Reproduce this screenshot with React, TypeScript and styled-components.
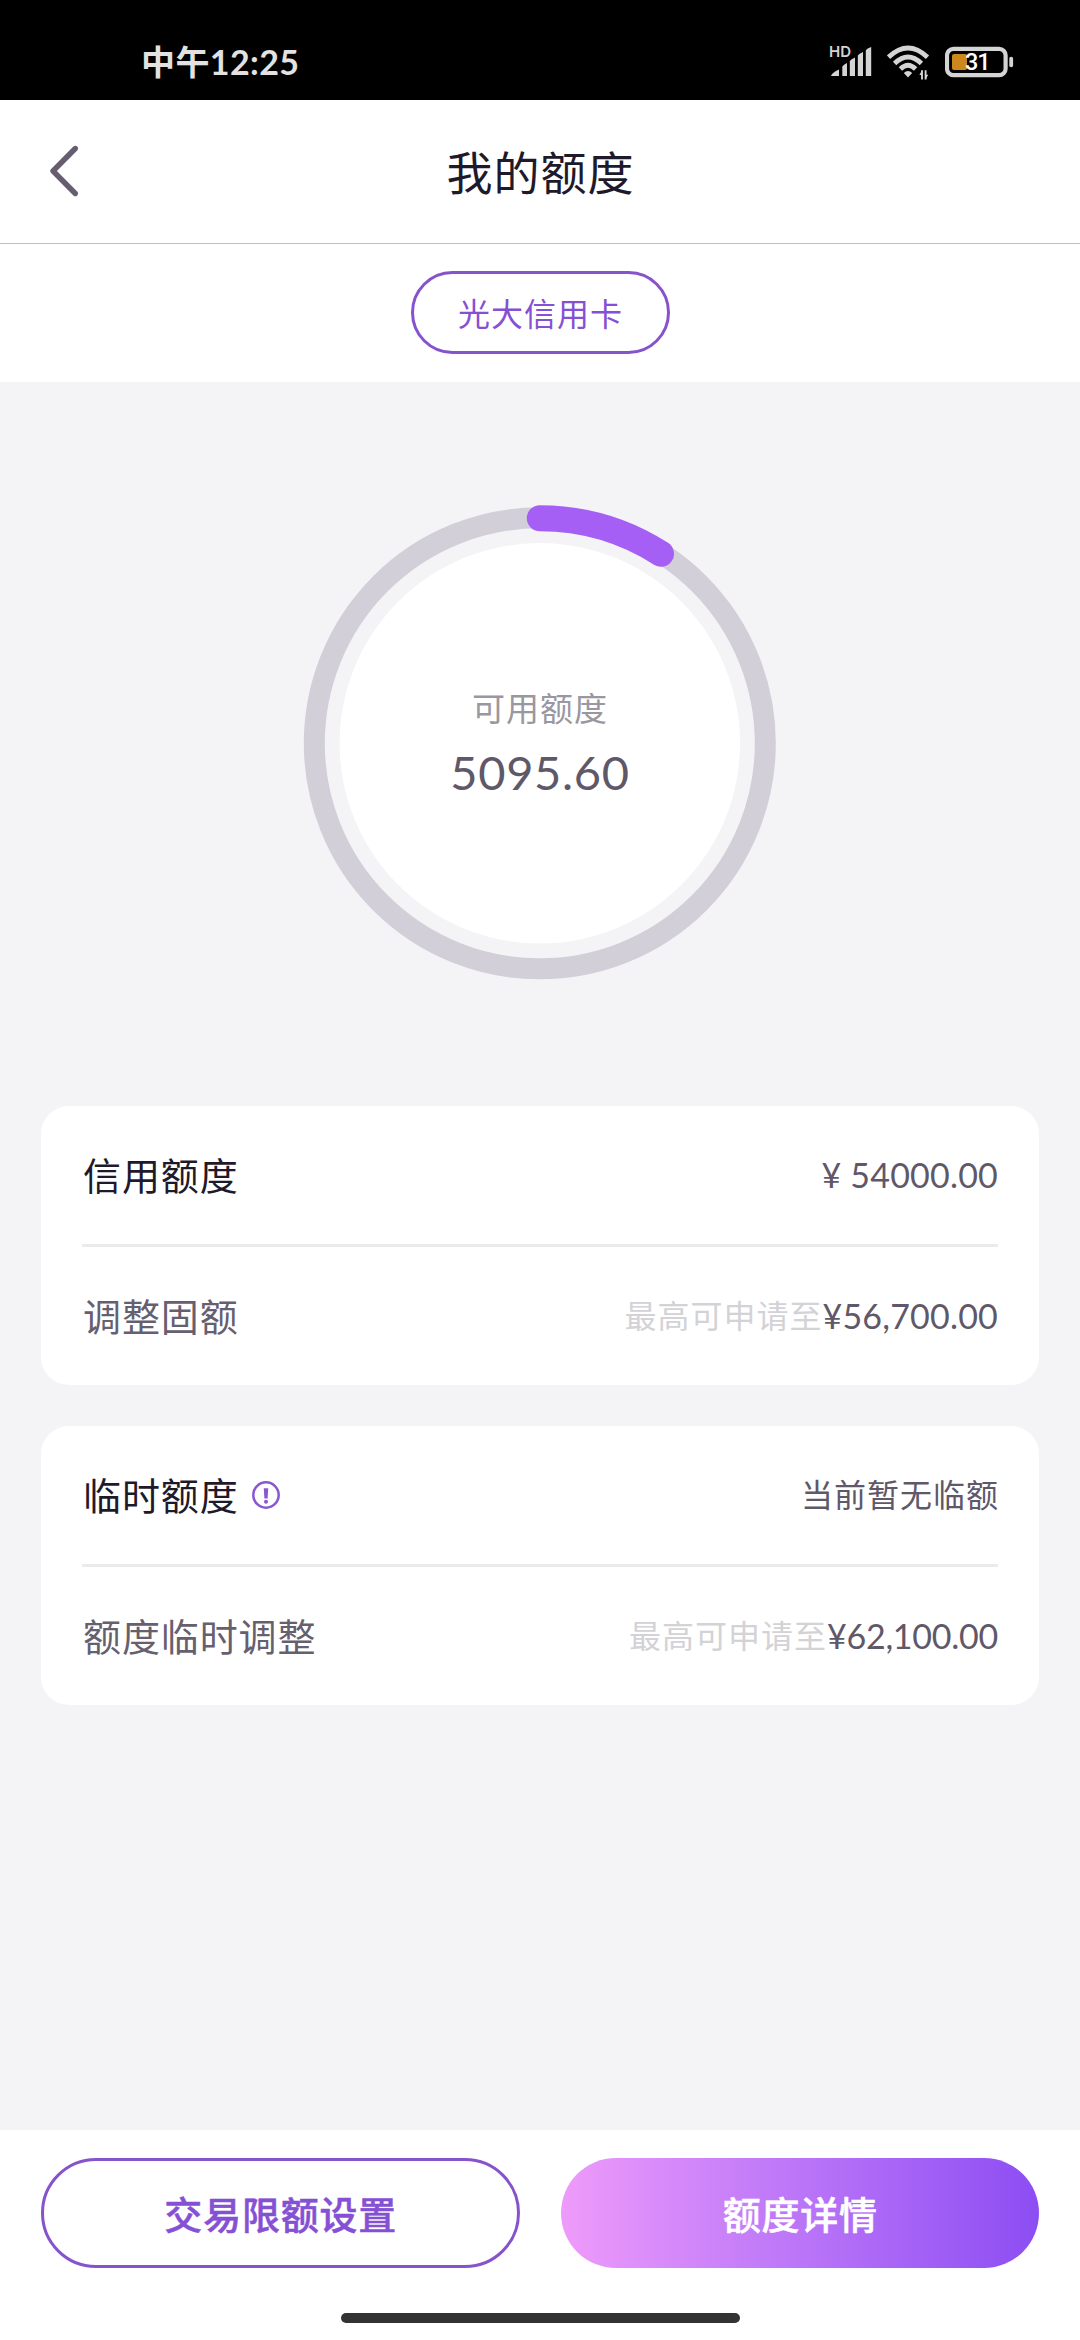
import React from "react";
import styled, { createGlobalStyle } from "styled-components";

const GlobalStyle = createGlobalStyle`
  *, *::before, *::after { box-sizing: border-box; }
  body {
    margin: 0;
    background: #f4f4f7;
    font-family: Lato, "Noto Sans CJK SC", sans-serif;
  }
`;

const Screen = styled.main`
  width: 1080px;
  height: 2340px;
  display: flex;
  flex-direction: column;
  background: #f4f4f7;
  overflow: hidden;
`;

const StatusBar = styled.div`
  height: 100px;
  flex: none;
  display: flex;
  align-items: flex-start;
  justify-content: space-between;
  padding: 44px 65px 0 141px;
  background: #000;
  color: #e2e2e2;
`;

const Clock = styled.div`
  display: flex;
  align-items: center;
  height: 36px;
  font-size: 34px;
  font-weight: 700;
  line-height: 36px;
  letter-spacing: 0.4px;
`;

const StatusIcons = styled.div`
  display: flex;
  align-items: flex-start;
  gap: 14px;
  height: 38px;
`;

const Signal = styled.div`
  position: relative;
  width: 44px;
  height: 38px;
`;

const SignalTag = styled.span`
  position: absolute;
  left: 0;
  top: 0;
  font-family: Inter, sans-serif;
  font-size: 15px;
  line-height: 15px;
  font-weight: 600;
  color: #d4d4d4;
`;

const Battery = styled.div`
  position: relative;
  width: 70px;
  height: 38px;
`;

const BatteryLevel = styled.span`
  position: absolute;
  left: 20px;
  top: 3px;
  font-family: Roboto, sans-serif;
  font-size: 23.5px;
  line-height: 30px;
  font-weight: 500;
  letter-spacing: -1px;
  color: #fff;
`;

const Header = styled.header`
  height: 144px;
  flex: none;
  display: grid;
  grid-template-columns: 130px 1fr 130px;
  align-items: center;
  background: #fff;
  border-bottom: 1px solid #bfbfc2;
`;

const BackButton = styled.button`
  justify-self: start;
  display: flex;
  margin: 0 0 2px 48px;
  padding: 0;
  border: 0;
  background: none;
`;

const Title = styled.h1`
  margin: 0;
  padding-top: 2px;
  font-size: 46px;
  font-weight: 400;
  line-height: 60px;
  letter-spacing: 1px;
  text-indent: 1px;
  text-align: center;
  color: #1e1a2b;
`;

const TabStrip = styled.nav`
  height: 138px;
  flex: none;
  display: flex;
  justify-content: center;
  padding-top: 27px;
  background: #fff;
`;

const CardTab = styled.button`
  width: 259px;
  height: 83px;
  padding: 0 0 2px 1px;
  border: 3px solid #8653cd;
  border-radius: 42px;
  background: #fff;
  color: #8650d4;
  font: inherit;
  font-size: 32px;
  letter-spacing: 1px;
`;

const Gauge = styled.section`
  flex: none;
  display: grid;
  place-items: center;
  width: 480px;
  height: 480px;
  margin: 121px auto 0 300px;
  > * { grid-area: 1 / 1; }
`;

const GaugeText = styled.div`
  display: flex;
  flex-direction: column;
  align-items: center;
  padding-top: 2px;
`;

const GaugeLabel = styled.span`
  font-size: 33px;
  line-height: 44px;
  letter-spacing: 1px;
  color: #99979f;
`;

const GaugeValue = styled.span`
  margin-top: 12px;
  font-size: 47px;
  line-height: 60px;
  letter-spacing: 0.7px;
  color: #5f5869;
`;

const Cards = styled.section`
  flex: 1;
  display: flex;
  flex-direction: column;
  gap: 41px;
  padding: 123px 41px 0;
`;

const Card = styled.div`
  height: 279px;
  padding: 0 41px;
  border-radius: 28px;
  background: #fff;
`;

const Row = styled.div`
  height: 138px;
  display: flex;
  align-items: center;
  justify-content: space-between;
  & + & {
    height: 141px;
    border-top: 3px solid #ebebec;
  }
`;

const RowLabel = styled.div<{ $strong?: boolean }>`
  display: flex;
  align-items: center;
  gap: 13px;
  padding-left: 1px;
  font-size: 38px;
  line-height: 54px;
  letter-spacing: 0.9px;
  color: ${(p) => (p.$strong ? "#1e1a2b" : "#665f6f")};
`;

const RowValue = styled.div`
  display: flex;
  align-items: center;
  font-size: 34px;
  line-height: 50px;
  white-space: pre;
  color: #5f5869;
`;

const Amount = styled.span<{ $spacing?: number }>`
  letter-spacing: ${(p) => p.$spacing ?? 0.2}px;
`;

const Hint = styled.span`
  font-size: 32px;
  letter-spacing: 1px;
  color: #d3d2d6;
`;

const Note = styled.span`
  font-size: 32px;
  letter-spacing: 1px;
  margin-right: -1px;
`;

const Footer = styled.footer`
  height: 210px;
  flex: none;
  display: flex;
  flex-direction: column;
  align-items: center;
  padding: 28px 41px 0;
  background: #fff;
`;

const Actions = styled.div`
  width: 100%;
  display: grid;
  grid-template-columns: 1fr 1fr;
  gap: 41px;
`;

const Action = styled.button<{ $filled?: boolean }>`
  height: 110px;
  padding: 0 0 2px 1px;
  border: ${(p) => (p.$filled ? "0" : "3px solid #8653cd")};
  border-radius: 55px;
  background: ${(p) =>
    p.$filled ? "linear-gradient(90deg, #ee9bfa 0%, #c07af8 44%, #8c4df3 100%)" : "#fff"};
  color: ${(p) => (p.$filled ? "#fff" : "#8650d4")};
  font: inherit;
  font-size: 38px;
  font-weight: 500;
  letter-spacing: 0.8px;
  -webkit-text-stroke: 0.5px currentColor;
`;

const HomeIndicator = styled.div`
  width: 399px;
  height: 10px;
  margin-top: 45px;
  border-radius: 5px;
  background: #333;
`;

const SignalIcon = () => (
  <svg width="44" height="38" viewBox="0 0 44 38" fill="#d4d4d4">
    <path d="M2 32 Q3 28.5 10 25.5 V32Z" />
    <path d="M13.3 32 V22.5 Q14.5 20.8 18 19 V32Z" />
    <path d="M20.8 32 V17 Q22 15.3 26 13.5 V32Z" />
    <path d="M28.8 32 V11.5 Q30 9.8 34 8 V32Z" />
    <path d="M36.8 32 V6.2 Q38 4.5 42.2 3 V32Z" />
  </svg>
);

const WifiIcon = () => (
  <svg width="44" height="38" viewBox="0 0 44 38" fill="none" stroke="#d4d4d4">
    <path d="M1.5 13.2 Q21 -5.2 40.5 13.2" strokeWidth="4.8" />
    <path d="M7.6 19.4 Q21 6.6 34.4 19.4" strokeWidth="4.8" />
    <path d="M13.4 25 Q21 17.6 28.6 25" strokeWidth="4.8" />
    <path d="M16.8 29 Q21 25 25.2 29 L21 33.4Z" fill="#d4d4d4" stroke="none" />
    <path d="M35 26.2 V35.6 M38.6 26.2 V35.6" strokeWidth="1.9" />
    <path d="M32.4 31 L35 26.2 V31Z M41.2 30.8 L38.6 35.6 V30.8Z" fill="#d4d4d4" stroke="none" />
  </svg>
);

const BatteryIcon = () => (
  <svg width="70" height="38" viewBox="0 0 70 38">
    <rect x="2" y="4.8" width="58.6" height="26.4" rx="6.5" fill="none" stroke="#d4d4d4" strokeWidth="4.2" />
    <rect x="7" y="10" width="15" height="16" rx="2" fill="#cd871f" />
    <rect x="64.3" y="12.8" width="3.8" height="10.4" rx="1.9" fill="#d4d4d4" />
  </svg>
);

const BackIcon = () => (
  <svg width="32" height="54" viewBox="0 0 32 54" fill="none">
    <path
      d="M27.3 4.5 L5 27 L27.3 49.5"
      stroke="#665e70"
      strokeWidth="5.4"
      strokeLinecap="round"
      strokeLinejoin="round"
    />
  </svg>
);

const InfoIcon = () => (
  <svg width="28" height="28" viewBox="0 0 28 28">
    <circle cx="14" cy="14" r="12.7" fill="none" stroke="#8a56d3" strokeWidth="2.5" />
    <path d="M11.8 7.2 H16.2 L15.6 17.4 H12.4Z" fill="#8a56d3" />
    <circle cx="14" cy="20.8" r="2" fill="#8a56d3" />
  </svg>
);

const GaugeRing = ({ degrees }: { degrees: number }) => {
  const angle = (degrees * Math.PI) / 180;
  const cx = 239.8;
  const cy = 240.3;
  const r = 225;
  const endX = cx + r * Math.sin(angle);
  const endY = cy - r * Math.cos(angle);
  return (
    <svg width="480" height="480" viewBox="0 0 480 480" fill="none">
      <circle cx={cx} cy={cy} r="225.5" stroke="#d2cfd8" strokeWidth="21" />
      <circle cx={cx} cy={cy} r="200.2" fill="#fff" />
      <path
        d={`M${cx} ${cy - r} A${r} ${r} 0 0 1 ${endX} ${endY}`}
        stroke="#a65ff5"
        strokeWidth="26"
        strokeLinecap="round"
      />
    </svg>
  );
};

export default function App() {
  return (
    <>
      <GlobalStyle />
      <Screen>
        <StatusBar>
          <Clock>中午12:25</Clock>
          <StatusIcons>
            <Signal>
              <SignalIcon />
              <SignalTag>HD</SignalTag>
            </Signal>
            <WifiIcon />
            <Battery>
              <BatteryIcon />
              <BatteryLevel>31</BatteryLevel>
            </Battery>
          </StatusIcons>
        </StatusBar>

        <Header>
          <BackButton aria-label="返回">
            <BackIcon />
          </BackButton>
          <Title>我的额度</Title>
        </Header>

        <TabStrip>
          <CardTab>光大信用卡</CardTab>
        </TabStrip>

        <Gauge>
          <GaugeRing degrees={32.6} />
          <GaugeText>
            <GaugeLabel>可用额度</GaugeLabel>
            <GaugeValue>5095.60</GaugeValue>
          </GaugeText>
        </Gauge>

        <Cards>
          <Card>
            <Row>
              <RowLabel $strong>信用额度</RowLabel>
              <RowValue>
                <Amount>¥ 54000.00</Amount>
              </RowValue>
            </Row>
            <Row>
              <RowLabel>调整固额</RowLabel>
              <RowValue>
                <Hint>最高可申请至</Hint>
                <Amount>¥56,700.00</Amount>
              </RowValue>
            </Row>
          </Card>
          <Card>
            <Row>
              <RowLabel $strong>
                临时额度
                <InfoIcon />
              </RowLabel>
              <RowValue>
                <Note>当前暂无临额</Note>
              </RowValue>
            </Row>
            <Row>
              <RowLabel>额度临时调整</RowLabel>
              <RowValue>
                <Hint>最高可申请至</Hint>
                <Amount $spacing={-0.25}>¥62,100.00</Amount>
              </RowValue>
            </Row>
          </Card>
        </Cards>

        <Footer>
          <Actions>
            <Action>交易限额设置</Action>
            <Action $filled>额度详情</Action>
          </Actions>
          <HomeIndicator />
        </Footer>
      </Screen>
    </>
  );
}
